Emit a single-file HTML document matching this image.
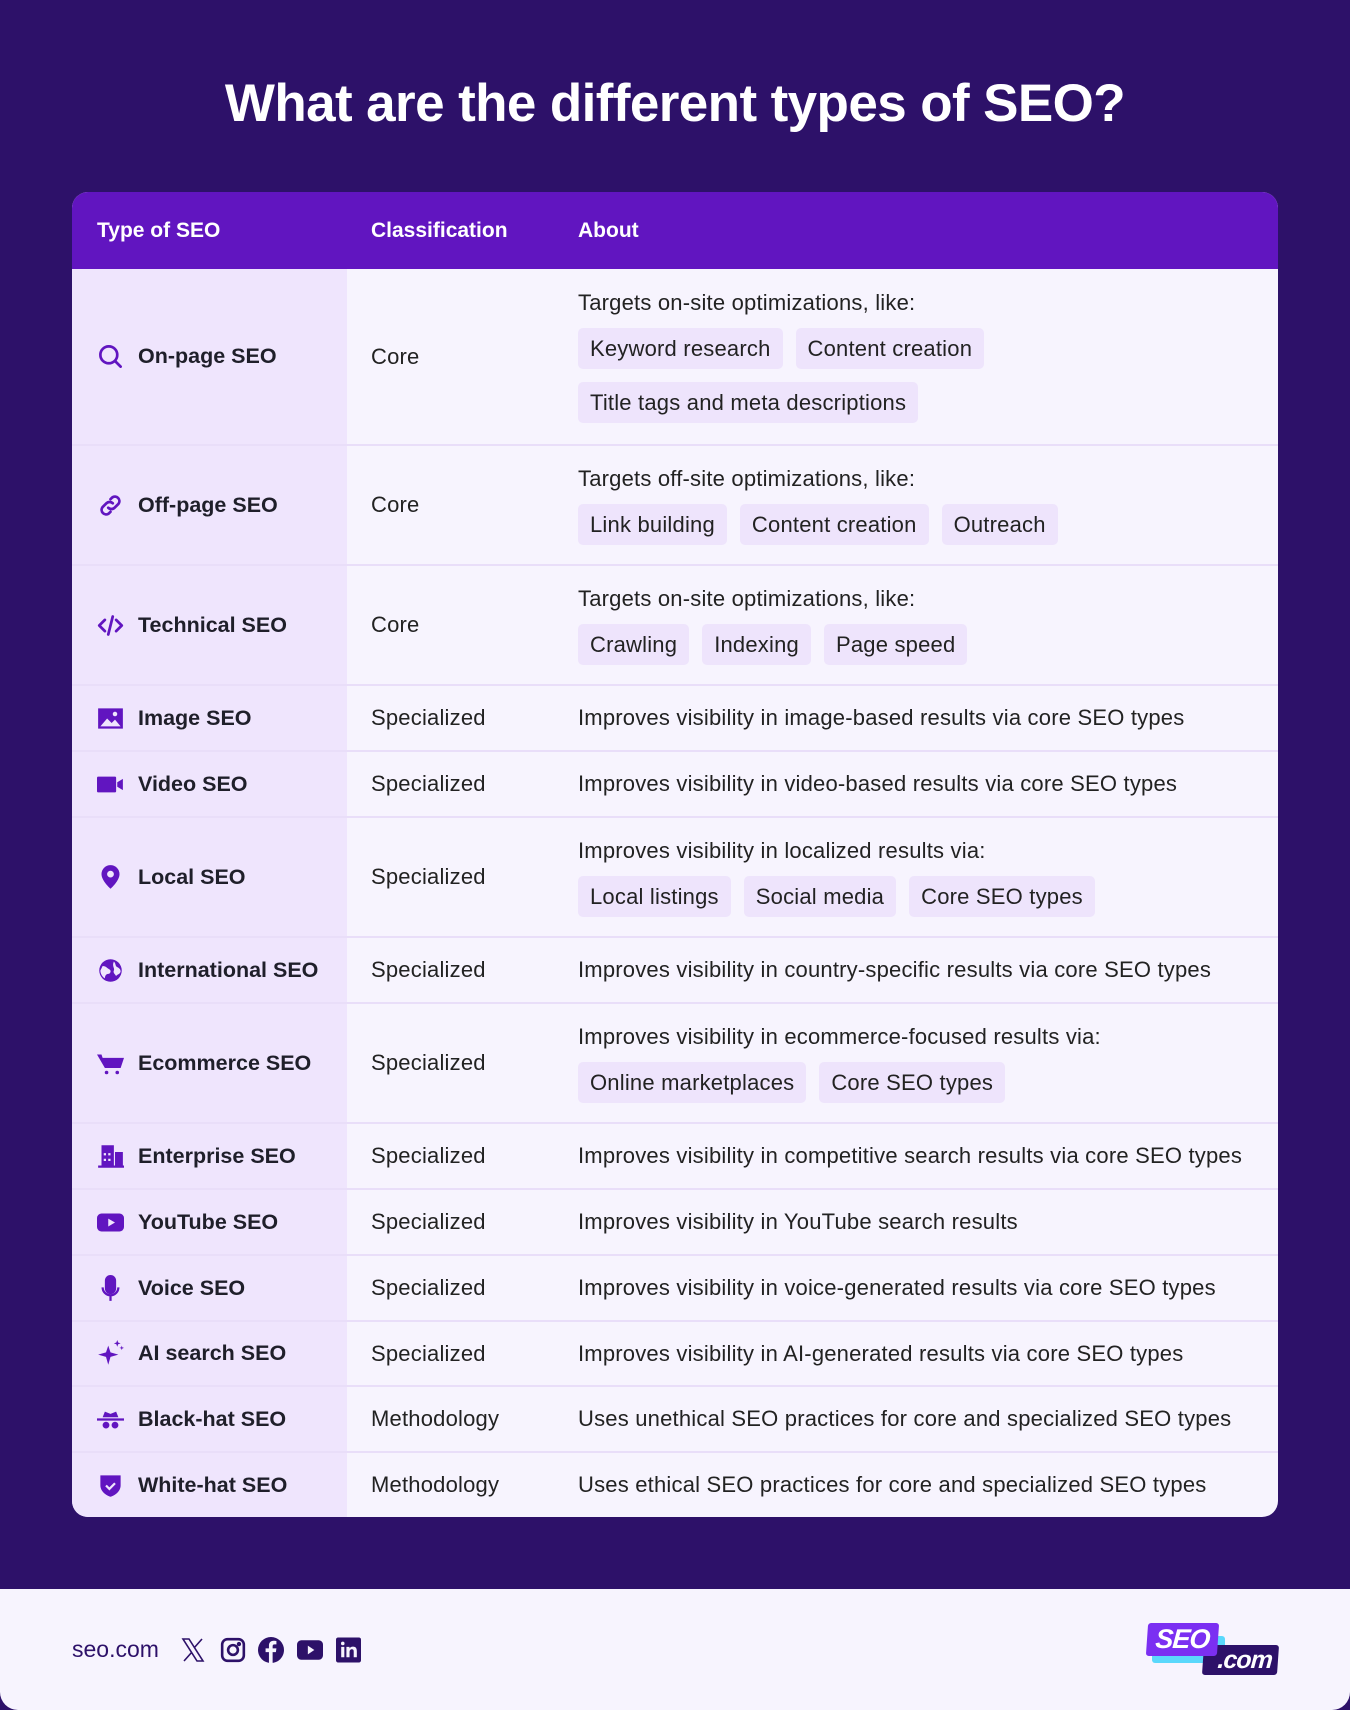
<!DOCTYPE html>
<html><head><meta charset="utf-8">
<style>
*{margin:0;padding:0;box-sizing:border-box}
body{width:1350px;height:1710px;background:#2d1169;font-family:"Liberation Sans",sans-serif;position:relative;overflow:hidden}
h1{position:absolute;top:72px;left:0;width:1350px;text-align:center;color:#fff;font-size:53px;font-weight:bold;letter-spacing:-0.6px;line-height:64px}
.tbl{position:absolute;left:72px;top:192px;width:1206px;height:1325px;border-radius:16px;overflow:hidden;background:#f7f4fe}
.hd{height:77px;background:#6115c0;color:#fff;font-weight:bold;font-size:21px;position:relative}
.hd span{position:absolute;top:27px}
.row{position:relative;border-top:2px solid #e9def9;display:flex}
.c1{width:275px;background:#efe5fd;display:flex;align-items:center;padding-left:25px;font-weight:bold;font-size:21.5px;color:#1f1f2a}
.c1 svg{width:27px;height:27px;margin-right:14px;flex:none}
.c2{width:231px;display:flex;align-items:center;padding-left:24px;font-size:22px;letter-spacing:0.2px;color:#222}
.c3{flex:1;display:flex;flex-direction:column;justify-content:center;font-size:22px;letter-spacing:0.2px;color:#222}
.tags{display:flex;flex-wrap:wrap;gap:13px;margin-top:12px}
.tag{background:#eee4fc;border-radius:5px;height:41px;line-height:41px;padding:0 12px;font-size:22px}
.foot{position:absolute;left:0;top:1589px;width:1350px;height:121px;background:#f7f4fe;border-radius:0 0 18px 18px}
</style></head><body>
<h1>What are the different types of SEO?</h1>
<div class="tbl">
<div class="hd"><span style="left:25px">Type of SEO</span><span style="left:299px">Classification</span><span style="left:506px">About</span></div>
<div class="row" style="height:175px;border-top:none"><div class="c1"><svg viewBox="0 0 24 24" fill="none" stroke="#6115c0" stroke-width="2.4" stroke-linecap="round"><circle cx="10.5" cy="10.5" r="7.5"/><path d="M16 16l5 5"/></svg>On-page SEO</div><div class="c2">Core</div><div class="c3"><div>Targets on-site optimizations, like:</div><div class="tags"><span class="tag">Keyword research</span><span class="tag">Content creation</span><span class="tag" style="margin-right:300px">Title tags and meta descriptions</span></div></div></div>
<div class="row" style="height:120px"><div class="c1"><svg viewBox="0 0 24 24" fill="none" stroke="#6115c0" stroke-width="2.4" stroke-linecap="round"><path d="M10 14a4 4 0 0 0 5.6 0l3.5-3.5a4 4 0 0 0-5.6-5.6L12 6.4"/><path d="M14 10a4 4 0 0 0-5.6 0L4.9 13.5a4 4 0 0 0 5.6 5.6L12 17.6"/></svg>Off-page SEO</div><div class="c2">Core</div><div class="c3"><div>Targets off-site optimizations, like:</div><div class="tags"><span class="tag">Link building</span><span class="tag">Content creation</span><span class="tag">Outreach</span></div></div></div>
<div class="row" style="height:120px"><div class="c1"><svg viewBox="0 0 24 24" fill="none" stroke="#6115c0" stroke-width="2.4" stroke-linecap="round" stroke-linejoin="round"><path d="M7 7l-5 5 5 5M17 7l5 5-5 5M14 4l-4 16"/></svg>Technical SEO</div><div class="c2">Core</div><div class="c3"><div>Targets on-site optimizations, like:</div><div class="tags"><span class="tag">Crawling</span><span class="tag">Indexing</span><span class="tag">Page speed</span></div></div></div>
<div class="row" style="height:66px"><div class="c1"><svg viewBox="0 0 24 24"><rect x="1" y="3" width="22" height="18" fill="#6115c0"/><path d="M3 19l6-7 4 4 3-3 5 6z" fill="#efe5fd"/><circle cx="16" cy="8" r="2" fill="#efe5fd"/></svg>Image SEO</div><div class="c2">Specialized</div><div class="c3">Improves visibility in image-based results via core SEO types</div></div>
<div class="row" style="height:66px"><div class="c1"><svg viewBox="0 0 24 24" fill="#6115c0"><rect x="0" y="5" width="17" height="14" rx="1"/><path d="M18 10l5-3v10l-5-3z"/></svg>Video SEO</div><div class="c2">Specialized</div><div class="c3">Improves visibility in video-based results via core SEO types</div></div>
<div class="row" style="height:120px"><div class="c1"><svg viewBox="0 0 24 24"><path d="M12 22s-8-7-8-13a8 8 0 0 1 16 0c0 6-8 13-8 13z" fill="#6115c0"/><circle cx="12" cy="9" r="3" fill="#efe5fd"/></svg>Local SEO</div><div class="c2">Specialized</div><div class="c3"><div>Improves visibility in localized results via:</div><div class="tags"><span class="tag">Local listings</span><span class="tag">Social media</span><span class="tag">Core SEO types</span></div></div></div>
<div class="row" style="height:66px"><div class="c1"><svg viewBox="0 0 24 24"><circle cx="12" cy="12" r="10" fill="#6115c0"/><path d="M5 8c3 0 4 2 6 3s1 4-1 4-3 2-3 4c-2-1-4-4-4-7z M15 4c2 2 1 4 3 5s3 2 3 4c-1 3-3 2-4 4-1-2-3-3-2-5s-2-4 0-8z" fill="#efe5fd"/></svg>International SEO</div><div class="c2">Specialized</div><div class="c3">Improves visibility in country-specific results via core SEO types</div></div>
<div class="row" style="height:120px"><div class="c1"><svg viewBox="0 0 24 24" fill="#6115c0"><path d="M0 4h4l1 3h19l-3 9H7z"/><circle cx="8.5" cy="20" r="1.6"/><circle cx="18" cy="20" r="1.6"/></svg>Ecommerce SEO</div><div class="c2">Specialized</div><div class="c3"><div>Improves visibility in ecommerce-focused results via:</div><div class="tags"><span class="tag">Online marketplaces</span><span class="tag">Core SEO types</span></div></div></div>
<div class="row" style="height:66px"><div class="c1"><svg viewBox="0 0 24 24"><path d="M1 22h23v-2h-1V8h-7v12h-1V2H4v18H1z" fill="#6115c0"/><path d="M6 9h2v2H6zM10 9h2v2h-2zM6 14h2v2H6zM10 14h2v2h-2z" fill="#efe5fd"/></svg>Enterprise SEO</div><div class="c2">Specialized</div><div class="c3">Improves visibility in competitive search results via core SEO types</div></div>
<div class="row" style="height:66px"><div class="c1"><svg viewBox="0 0 24 24"><rect x="0" y="4" width="24" height="16" rx="4" fill="#6115c0"/><path d="M10 8.5v7l6-3.5z" fill="#efe5fd"/></svg>YouTube SEO</div><div class="c2">Specialized</div><div class="c3">Improves visibility in YouTube search results</div></div>
<div class="row" style="height:66px"><div class="c1"><svg viewBox="0 0 24 24" fill="none" stroke="#6115c0" stroke-width="2"><rect x="8" y="1" width="8" height="15" rx="4" fill="#6115c0"/><path d="M5 11a7 7 0 0 0 14 0M12 18v5"/></svg>Voice SEO</div><div class="c2">Specialized</div><div class="c3">Improves visibility in voice-generated results via core SEO types</div></div>
<div class="row" style="height:65px"><div class="c1"><svg viewBox="0 0 24 24" fill="#6115c0"><path d="M10 5l2 6 7 2-7 2-2 7-2-7-7-2 7-2z"/><path d="M18 0l.8 2.2L21 3l-2.2.8L18 6l-.8-2.2L15 3l2.2-.8zM22 5l.5 1.5L24 7l-1.5.5L22 9l-.5-1.5L20 7l1.5-.5z"/></svg>AI search SEO</div><div class="c2">Specialized</div><div class="c3">Improves visibility in AI-generated results via core SEO types</div></div>
<div class="row" style="height:66px"><div class="c1"><svg viewBox="0 0 24 24" fill="#6115c0"><path d="M5 10l2-5 5 2 5-2 2 5z"/><rect x="0" y="11" width="24" height="2"/><circle cx="8" cy="17" r="3"/><circle cx="16" cy="17" r="3"/></svg>Black-hat SEO</div><div class="c2">Methodology</div><div class="c3">Uses unethical SEO practices for core and specialized SEO types</div></div>
<div class="row" style="height:66px"><div class="c1"><svg viewBox="0 0 24 24"><path d="M3 3h18v9c0 5-5 9-9 10-4-1-9-5-9-10z" fill="#6115c0"/><path d="M8 12l3 3 5-5" fill="none" stroke="#efe5fd" stroke-width="2"/></svg>White-hat SEO</div><div class="c2">Methodology</div><div class="c3">Uses ethical SEO practices for core and specialized SEO types</div></div>
</div>
<div class="foot">
<div style="position:absolute;left:72px;top:47px;font-size:23px;color:#2d1169">seo.com</div>
<svg style="position:absolute;left:181px;top:48px" width="24" height="26" viewBox="0 0 24 24" fill="none" stroke="#2d1169" stroke-width="1.6"><path d="M2 1h6l14 22h-6zM21 1l-8 9M3 23l8-9"/></svg>
<svg style="position:absolute;left:220px;top:48px" width="26" height="26" viewBox="0 0 24 24" fill="none" stroke="#2d1169" stroke-width="2.4"><rect x="2" y="2" width="20" height="20" rx="5"/><circle cx="12" cy="12" r="4.5"/><circle cx="17.5" cy="6.5" r=".8" fill="#2d1169"/></svg>
<svg style="position:absolute;left:258px;top:48px" width="26" height="26" viewBox="0 0 24 24"><circle cx="12" cy="12" r="12" fill="#2d1169"/><path d="M13.5 24V14h3l.5-3.5h-3.5V8.5c0-1 .4-1.7 1.8-1.7H17V3.7c-.4 0-1.5-.2-2.6-.2-2.6 0-4.3 1.6-4.3 4.5v2.5H7V14h3.1v10z" fill="#f7f4fe"/></svg>
<svg style="position:absolute;left:297px;top:50px" width="26" height="22" viewBox="0 0 24 20"><rect x="0" y="1" width="24" height="18" rx="4" fill="#2d1169"/><path d="M10 6v8l6-4z" fill="#f7f4fe"/></svg>
<svg style="position:absolute;left:336px;top:48px" width="25" height="26" viewBox="0 0 24 24"><rect width="24" height="24" rx="2" fill="#2d1169"/><path d="M5 9h3v10H5zM6.5 4a1.7 1.7 0 1 1 0 3.4 1.7 1.7 0 0 1 0-3.4zM10 9h3v1.5c.5-1 1.7-1.8 3.3-1.8 3 0 3.7 2 3.7 4.6V19h-3v-5c0-1.3 0-2.7-1.7-2.7S13 12.6 13 14v5h-3z" fill="#f7f4fe"/></svg>
<div style="position:absolute;left:1152px;top:47px;width:73px;height:27px;background:#5ad8fc;border-radius:3px"></div>
<div style="position:absolute;left:1203px;top:56px;width:75px;height:30px;background:#2d1169;border-radius:3px;transform:skewX(-4deg);color:#fff;font-weight:bold;font-style:italic;font-size:25px;line-height:30px;text-align:right;padding-right:6px;letter-spacing:-1px">.com</div>
<div style="position:absolute;left:1147px;top:34px;width:71px;height:33px;background:#7b2ff2;border-radius:3px;transform:skewX(-4deg);color:#fff;font-weight:bold;font-style:italic;font-size:27px;line-height:33px;text-align:center;letter-spacing:-1px">SEO</div>
</div>
</body></html>
